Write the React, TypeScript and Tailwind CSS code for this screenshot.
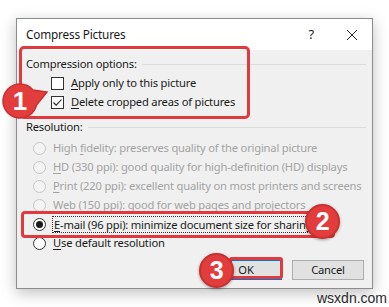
import React from "react";

const font = { fontFamily: '"Noto Sans", "Open Sans", sans-serif' };

// underline one access-key letter like a Windows dialog
const Key: React.FC<{ k: string; rest: string }> = ({ k, rest }) => (
  <span>
    <span className="underline underline-offset-2">{k}</span>
    {rest}
  </span>
);

const Checkbox: React.FC<{ checked?: boolean }> = ({ checked }) => (
  <div className="w-[13px] h-[13px] border border-[#333] bg-white flex items-center justify-center shrink-0">
    {checked && (
      <svg width="11" height="11" viewBox="0 0 11 11">
        <path d="M1.5 5.5 L4.2 8.2 L9.5 2.5" fill="none" stroke="#222" strokeWidth="1.1" />
      </svg>
    )}
  </div>
);

const Radio: React.FC<{ checked?: boolean; disabled?: boolean }> = ({ checked, disabled }) => (
  <div
    className={`w-[13px] h-[13px] rounded-full border flex items-center justify-center shrink-0 ${
      disabled ? "border-[#c6c6c6] bg-[#f4f4f4]" : "border-[#333] bg-white"
    }`}
  >
    {checked && <div className="w-[7px] h-[7px] rounded-full bg-[#1a1a1a]" />}
  </div>
);

const Section: React.FC<{ label: string }> = ({ label }) => (
  <div className="h-[16px] flex items-center gap-[5px] pl-[9px] pr-[6px]">
    <span className="whitespace-nowrap">{label}</span>
    <div className="flex-1 h-px bg-[#dcdcdc]" />
  </div>
);

const resolutions = [
  { k: "", pre: "High ", key: "f", rest: "idelity: preserves quality of the original picture" },
  { k: "H", rest: "D (330 ppi): good quality for high-definition (HD) displays" },
  { k: "P", rest: "rint (220 ppi): excellent quality on most printers and screens" },
  { k: "W", rest: "eb (150 ppi): good for web pages and projectors" },
];

const Badge: React.FC<{ n: string; className: string }> = ({ n, className }) => (
  <div
    className={`absolute w-[35px] h-[35px] rounded-full bg-[#e23c3d] border-2 border-[#c9302f] shadow-[0_1px_3px_rgba(0,0,0,0.35)] flex items-center justify-center text-white font-bold text-[25px] ${className}`}
    style={{ fontFamily: '"Liberation Sans", Arial, sans-serif' }}
  >
    {n}
  </div>
);

const App: React.FC = () => {
  return (
    <div
      className="relative w-[389px] h-[307px] bg-white overflow-hidden text-[11.2px] tracking-[-0.2px] text-[#1a1a1a]"
      style={font}
    >
      {/* dialog */}
      <div className="ml-[16px] mt-[18px] w-[357px] h-[271px] border border-[#8c8c8c] shadow-[0_4px_14px_rgba(0,0,0,0.25)] flex flex-col">
        <div className="h-[31px] bg-white flex items-center pl-[9px] pr-[14px]">
          <span className="text-[11.8px] flex-1">Compress Pictures</span>
          <span className="text-[13px] mr-[32px]">?</span>
          <svg width="12" height="12" viewBox="0 0 12 12">
            <path d="M1 1 L11 11 M11 1 L1 11" stroke="#222" strokeWidth="1" />
          </svg>
        </div>
        <div className="flex-1 bg-[#f0f0f0] flex flex-col">
          <div className="mt-[6px]">
            <Section label="Compression options:" />
          </div>
          <div className="mt-[2px] pl-[34px] flex flex-col">
            <div className="h-[19px] flex items-center gap-[7px]">
              <Checkbox />
              <Key k="A" rest="pply only to this picture" />
            </div>
            <div className="h-[19px] flex items-center gap-[7px]">
              <Checkbox checked />
              <Key k="D" rest="elete cropped areas of pictures" />
            </div>
          </div>
          <div className="mt-[7px]">
            <Section label="Resolution:" />
          </div>
          <div className="mt-[4px] pl-[16px] flex flex-col">
            {resolutions.map((r, i) => (
              <div key={i} className="h-[19px] flex items-center gap-[7px] text-[#a3a3a3] whitespace-nowrap">
                <Radio disabled />
                {r.pre ? (
                  <span>
                    {r.pre}
                    <span className="underline underline-offset-2">{r.key}</span>
                    {r.rest}
                  </span>
                ) : (
                  <Key k={r.k} rest={r.rest} />
                )}
              </div>
            ))}
            <div className="h-[19px] flex items-center gap-[6px] whitespace-nowrap">
              <Radio checked />
              <span className="border border-dotted border-[#333] px-[1px] leading-[15px]">
                <Key k="E" rest="-mail (96 ppi): minimize document size for sharing" />
              </span>
            </div>
            <div className="h-[19px] flex items-center gap-[7px] whitespace-nowrap">
              <Radio />
              <Key k="U" rest="se default resolution" />
            </div>
          </div>
          <div className="mt-[7px] pr-[8px] flex justify-end gap-[10px]">
            <div className="w-[72px] h-[20px] border border-[#0078d7] bg-[#e1e1e1] flex items-center justify-center">OK</div>
            <div className="w-[72px] h-[20px] border border-[#adadad] bg-[#e1e1e1] flex items-center justify-center">Cancel</div>
          </div>
        </div>
      </div>

      {/* annotation boxes */}
      <div className="absolute left-[19px] top-[46px] w-[231px] h-[73px] border-[3px] border-[#e0393e] rounded-[5px]" />
      <div className="absolute left-[21px] top-[211px] w-[314px] h-[27px] border-[3px] border-[#e0393e] rounded-[4px]" />
      <div className="absolute left-[229px] top-[257px] w-[54px] h-[22px] border-[3px] border-[#e0393e] rounded-[3px]" />

      {/* badge 1 with pointer */}
      <svg className="absolute left-0 top-[80px]" width="52" height="42" viewBox="0 0 52 42">
        <path
          d="M20 4 A17 17 0 1 0 36.5 25 L47 12 L33 10 A17 17 0 0 0 20 4 Z"
          fill="#e23c3d"
          stroke="#c9302f"
          strokeWidth="1.5"
        />
      </svg>
      <div
        className="absolute left-[8px] top-[86px] w-[24px] h-[30px] flex items-center justify-center text-white font-bold text-[26px]"
        style={{ fontFamily: '"Liberation Sans", Arial, sans-serif' }}
      >
        1
      </div>
      <Badge n="2" className="left-[305px] top-[204px]" />
      <Badge n="3" className="left-[199px] top-[253px]" />

      <div
        className="absolute left-[317px] top-[288px] text-[14px] tracking-normal text-[#2a2a2a]"
        style={{ fontFamily: '"Liberation Sans", Arial, sans-serif' }}
      >
        wsxdn.com
      </div>
    </div>
  );
};

export default App;
